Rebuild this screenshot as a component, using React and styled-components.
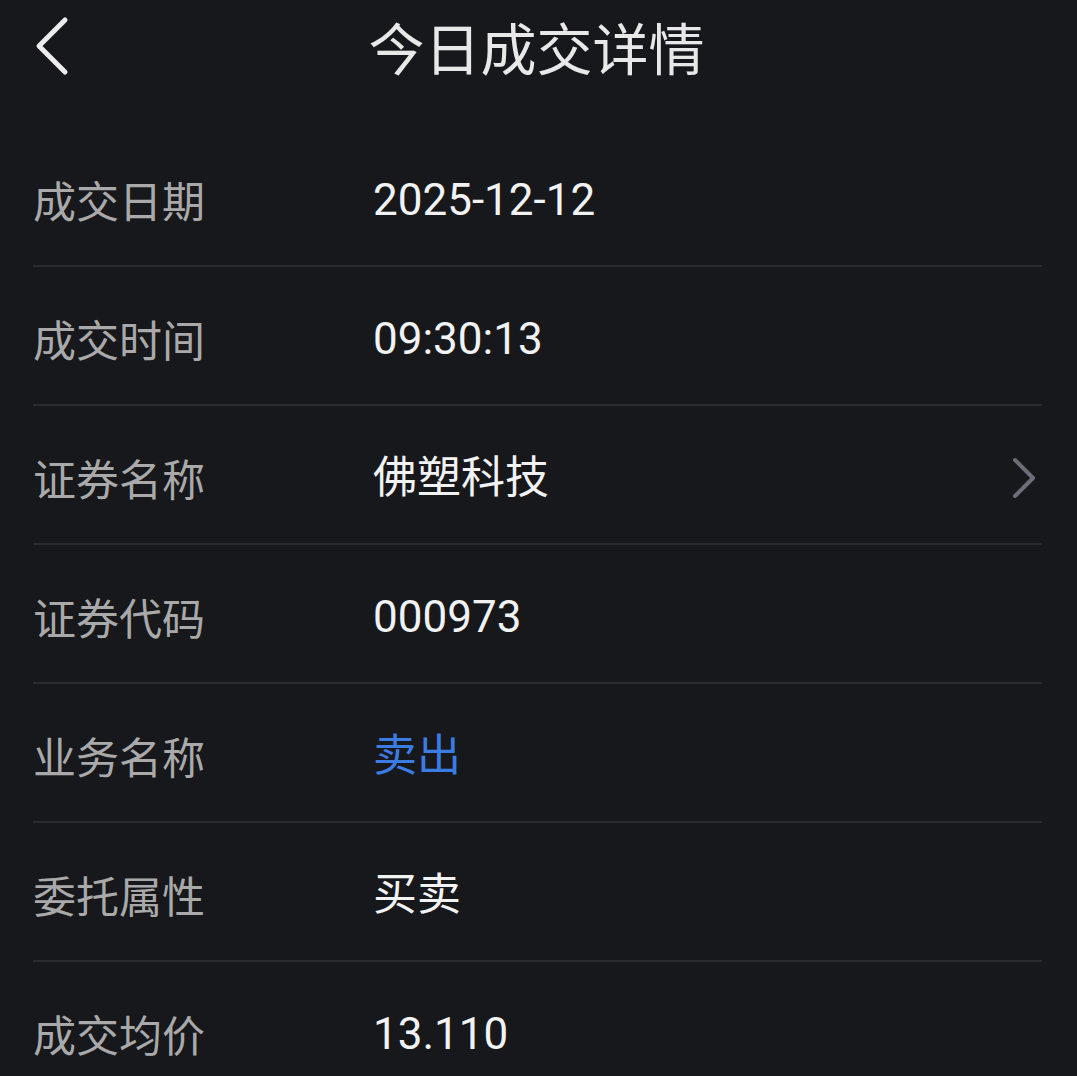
import React from "react";
import styled, { createGlobalStyle } from "styled-components";

const GlobalStyle = createGlobalStyle`
  html, body {
    margin: 0;
    padding: 0;
    background: #17181b;
  }
  body {
    font-family: "Noto Sans CJK SC", "Noto Sans", sans-serif;
  }
`;

const rows = [
  { label: "成交日期", value: "2025-12-12" },
  { label: "成交时间", value: "09:30:13" },
  { label: "证券名称", value: "佛塑科技", link: true },
  { label: "证券代码", value: "000973" },
  { label: "业务名称", value: "卖出", tone: "blue" },
  { label: "委托属性", value: "买卖" },
  { label: "成交均价", value: "13.110" },
];

const ChevronLeft = () => (
  <svg width="36" height="60" viewBox="0 0 36 60" fill="none">
    <path
      d="M31 4 L5 30 L31 56"
      stroke="#ececec"
      strokeWidth="5"
      strokeLinecap="round"
      strokeLinejoin="round"
    />
  </svg>
);

const ChevronRight = () => (
  <svg width="26" height="42" viewBox="0 0 26 42" fill="none">
    <path
      d="M4 3 L22 21 L4 39"
      stroke="#6b6e76"
      strokeWidth="4"
      strokeLinecap="round"
      strokeLinejoin="round"
    />
  </svg>
);

export default function App() {
  return (
    <>
      <GlobalStyle />
      <Page>
        <Header>
          <BackButton>
            <ChevronLeft />
          </BackButton>
          <Title>今日成交详情</Title>
        </Header>
        <List>
          {rows.map((row) => (
            <Row key={row.label}>
              <Label>{row.label}</Label>
              <Value tone={row.tone}>{row.value}</Value>
              {row.link && (
                <Arrow>
                  <ChevronRight />
                </Arrow>
              )}
            </Row>
          ))}
        </List>
      </Page>
    </>
  );
}

const Page = styled.div`
  width: 1077px;
  height: 1076px;
  overflow: hidden;
  background: #17181b;
`;

const Header = styled.div`
  position: relative;
  height: 96px;
  display: flex;
  align-items: center;
  justify-content: center;
  margin-bottom: 32px;
`;

const BackButton = styled.div`
  position: absolute;
  left: 34px;
  top: 16px;
  display: flex;
`;

const Title = styled.div`
  font-size: 56px;
  color: #e8e8e8;
  line-height: 1;
  margin-top: -4px;
  margin-left: -4px;
`;

const List = styled.div`
  padding: 0 35px 0 33px;
`;

const Row = styled.div`
  height: 139px;
  display: flex;
  align-items: center;
  border-bottom: 2px solid #2a2b2f;
  padding-top: 6px;
  box-sizing: border-box;
`;

const Label = styled.div`
  width: 340px;
  font-size: 43px;
  color: #a9a9a9;
  line-height: 1;
`;

const Value = styled.div`
  flex: 1;
  font-family: Roboto, "Noto Sans CJK SC", sans-serif;
  font-size: 44px;
  line-height: 1;
  color: ${(p) => (p.tone === "blue" ? "#3b7ce2" : "#f2f2f2")};
`;

const Arrow = styled.div`
  display: flex;
  margin-right: 5px;
`;
